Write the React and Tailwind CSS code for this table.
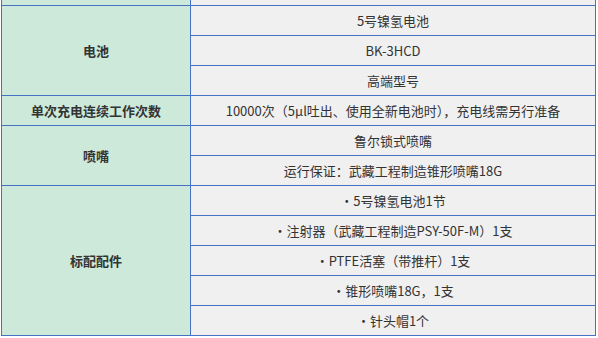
const sections = [
  { label: '', rows: [''] },
  { label: '电池', rows: ['5号镍氢电池', 'BK-3HCD', '高端型号'] },
  {
    label: '单次充电连续工作次数',
    rows: ['10000次（5μl吐出、使用全新电池时），充电线需另行准备'],
  },
  { label: '喷嘴', rows: ['鲁尔锁式喷嘴', '运行保证：武藏工程制造锥形喷嘴18G'] },
  {
    label: '标配配件',
    rows: [
      '·5号镍氢电池1节',
      '·注射器（武藏工程制造PSY-50F-M）1支',
      '·PTFE活塞（带推杆）1支',
      '·锥形喷嘴18G，1支',
      '·针头帽1个',
    ],
  },
]

function Section({ label, rows }) {
  return (
    <div className="flex border-b border-[#4472c4]">
      <div className="flex w-[189px] shrink-0 items-center justify-center border-r border-[#4472c4] bg-[#cde9da] font-bold">
        {label}
      </div>
      <div className="flex flex-1 flex-col bg-[#f0f0f0]">
        {rows.map((r, i) => (
          <div
            key={i}
            className={
              i < rows.length - 1
                ? 'flex h-[30px] items-center justify-center border-b border-[#4472c4]'
                : 'flex h-[29px] items-center justify-center'
            }
          >
            {r}
          </div>
        ))}
      </div>
    </div>
  )
}

export default function App() {
  return (
    <div className="h-[338px] w-[598px] overflow-hidden bg-white text-[13px] text-[#333] [font-family:'Noto_Sans_CJK_SC','Noto_Sans',sans-serif]">
      <div className="ml-[1px] mt-[-24px] w-[595px] border-x border-[#4472c4]">
        {sections.map((s, i) => (
          <Section key={i} {...s} />
        ))}
      </div>
    </div>
  )
}
